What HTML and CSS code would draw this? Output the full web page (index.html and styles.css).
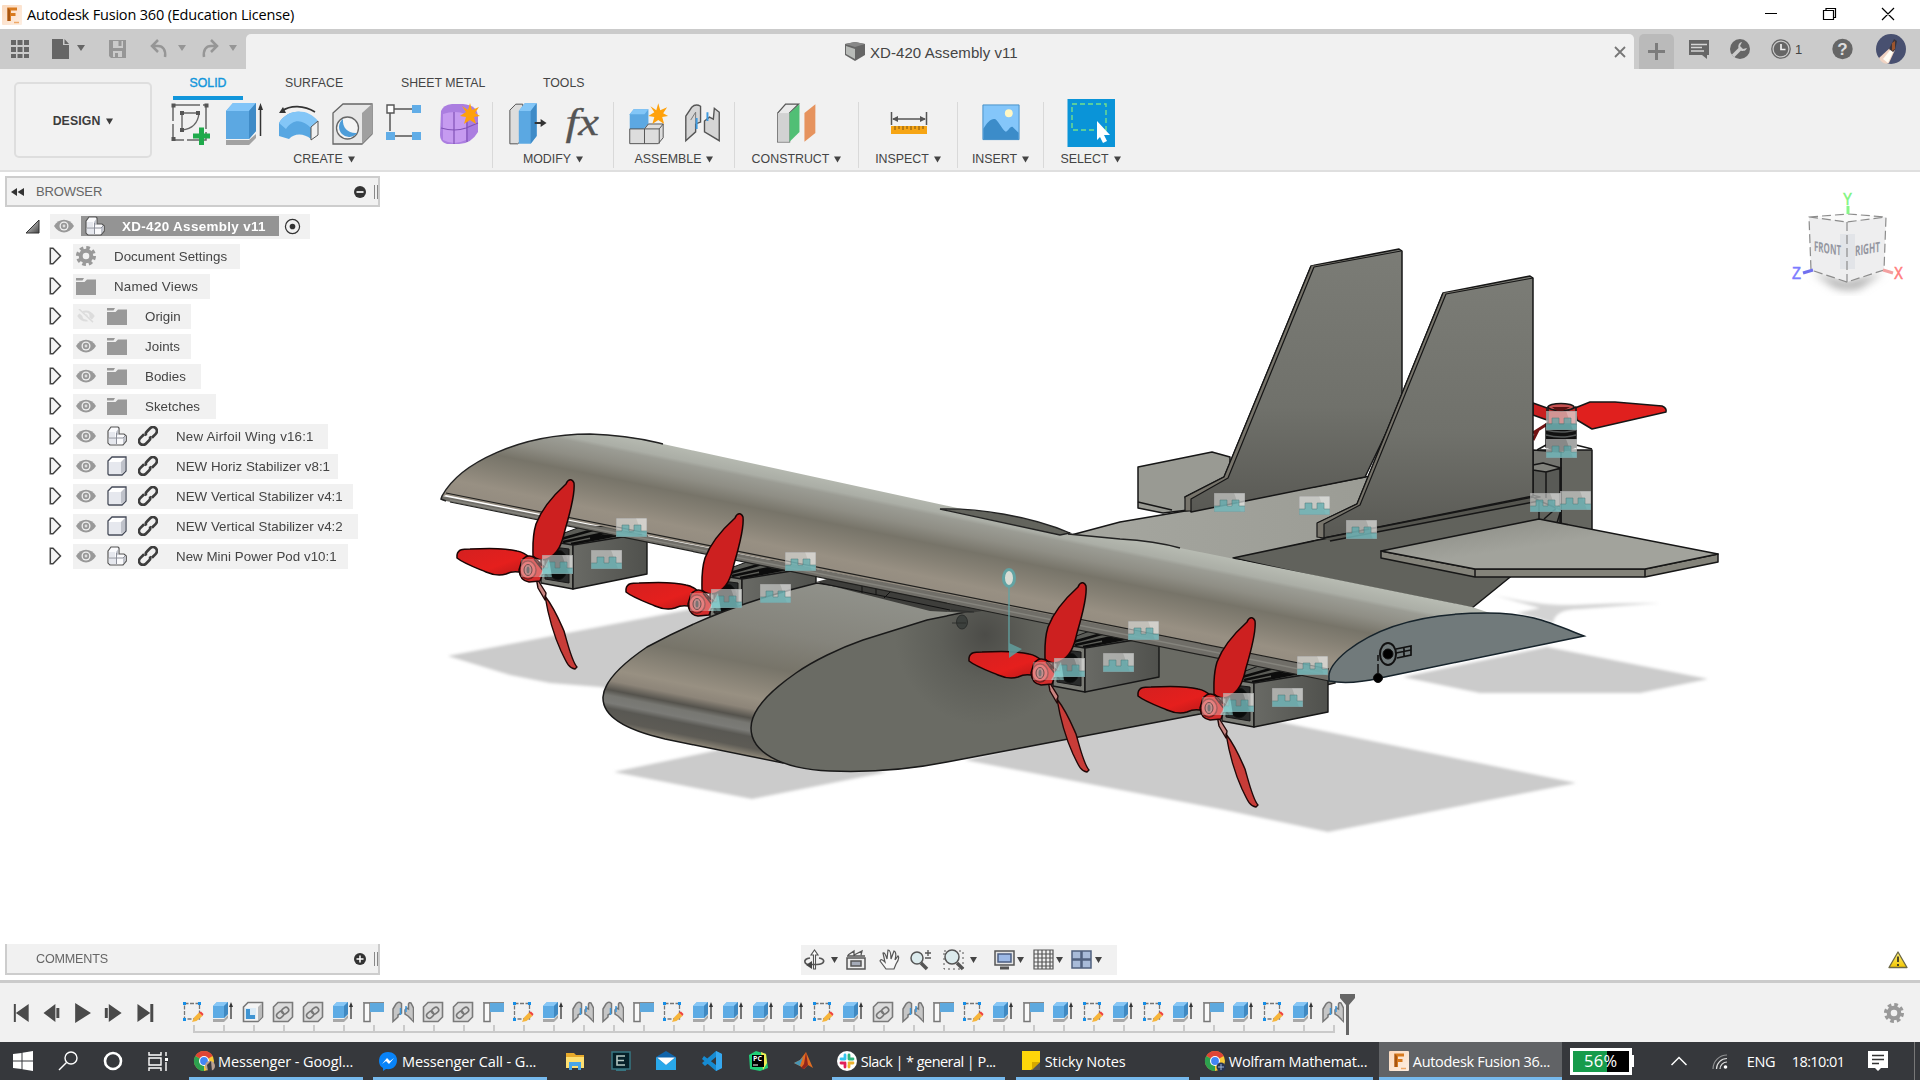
FILE: index.html
```html
<!DOCTYPE html>
<html lang="en">
<head>
<meta charset="utf-8">
<title>Autodesk Fusion 360 (Education License)</title>
<link rel="stylesheet" href="styles.css">
</head>
<body>
<svg class="defs" aria-hidden="true">
  <defs>
    <linearGradient id="orange" x1="0" y1="0" x2="1" y2="1"><stop offset="0" stop-color="#fbd9bd"/><stop offset="1" stop-color="#fdeee2"/></linearGradient>
    <linearGradient id="tri" x1="0" y1="0" x2="1" y2="1"><stop offset="0" stop-color="#eee"/><stop offset="1" stop-color="#444"/></linearGradient>
    <linearGradient id="warn" x1="0" y1="0" x2="0" y2="1"><stop offset="0" stop-color="#fff27a"/><stop offset="1" stop-color="#f2c500"/></linearGradient>
  </defs>
  <symbol id="fusion" viewBox="0 0 20 20"><rect width="20" height="20" rx="1" fill="url(#orange)"/><path d="M5.500 16V2.500H15V5.500H9V8H13.500V11H9V16Z" fill="#d87a1e"/><path d="M5.500 2.500L8 5V16H5.500Z" fill="#a85510"/><path d="M12 17.500h5" stroke="#efa868" stroke-width="1.500"/></symbol>
  <symbol id="caret" viewBox="0 0 8 7"><path d="M0 0H8L4 7Z" fill="currentColor"/></symbol>
  <symbol id="eye" viewBox="0 0 20 14"><path d="M0 7C5-1.500 15-1.500 20 7C15 15.500 5 15.500 0 7Z" fill="#999"/><circle cx="10" cy="7" r="4.500" fill="#f1f1f1"/><circle cx="10" cy="7" r="3.200" fill="#999"/><circle cx="10" cy="7" r="1.400" fill="#ddd"/></symbol>
  <symbol id="eyeoff" viewBox="0 0 20 16"><path d="M0 8C5-.500 15-.500 20 8C15 16.500 5 16.500 0 8Z" fill="#dcdcdc"/><circle cx="10" cy="8" r="4" fill="#f1f1f1"/><circle cx="10" cy="8" r="2" fill="#dcdcdc"/><path d="M1 1L18 16" stroke="#f1f1f1" stroke-width="4"/><path d="M2 0L18 15" stroke="#dcdcdc" stroke-width="1.700"/></symbol>
  <symbol id="folder" viewBox="0 0 20 17"><path d="M0 0H8L6.500 2.500H0ZM0 4H8.500L11 1.500H20V17H0Z" fill="#999"/></symbol>
  <symbol id="gear" viewBox="0 0 20 20"><circle cx="10" cy="10" r="8.200" fill="none" stroke="#999" stroke-width="3.600" stroke-dasharray="3.600 2.840"/><circle cx="10" cy="10" r="5.300" fill="none" stroke="#999" stroke-width="4"/></symbol>
  <symbol id="arrow" viewBox="0 0 12 18"><path d="M.800 1.200H3.500L11 9L3.500 16.800H.800Z" fill="#f4f4f4" stroke="#444" stroke-width="1.500"/></symbol>
  <symbol id="comp" viewBox="0 0 20 20"><path d="M1 5L4 1H11L12 2V8H17L19.300 10V15L16 19H3L1 17Z" fill="#fafafc" stroke="#555" stroke-width="1.200"/><path d="M1.800 12H9V18H3L1.800 17ZM2 6H8V11H2Z" fill="#e6e8ee"/><path d="M9 6L11.300 3V8L9 11ZM16 12L18.500 10V15L16 18Z" fill="#bfc2ca"/><path d="M9.500 7V18M10 12H16L18 10M2 12H9" fill="none" stroke="#8d909a" stroke-width="1"/></symbol>
  <symbol id="body" viewBox="0 0 20 20"><path d="M1 5L5 1H19V15L15 19H2L1 18Z" fill="#fff" stroke="#444a58" stroke-width="1.300"/><path d="M2 6H14V18H2Z" fill="#e6e8ee"/><path d="M14 6L18 2V15L14 18Z" fill="#bfc2ca"/></symbol>
  <symbol id="link" viewBox="0 0 20 20"><g transform="rotate(-45 10 10)" fill="none" stroke="#3d3d3d" stroke-width="2.700"><path d="M8.500 6H3A3.500 3.500 0 0 0 3 14H7.500A3.500 3.500 0 0 0 11 11.500"/><path d="M11.500 14H17A3.500 3.500 0 0 0 17 6H12.500A3.500 3.500 0 0 0 9 8.500"/></g></symbol>
  <symbol id="t-sketch" viewBox="0 0 22 22"><path d="M2.500 2.500H17.500V18H2.500Z" fill="none" stroke="#777" stroke-width="1.300" stroke-dasharray="4 1.500"/><path d="M1 1h3v3h-3zM16 1h3v3h-3zM1 17h3v3h-3z" fill="#168fe8"/><path d="M10 21L12 16.500L17 11.500L20.500 15L14.500 20Z" fill="#f6b53c"/><path d="M17 11.500L20.500 15L21.500 13L19 10.500Z" fill="#f0413c"/></symbol>
  <symbol id="t-ext" viewBox="0 0 22 22"><path d="M1 21V18H12L16 14V17L12 21H1Z" fill="#a8a8a8"/><path d="M1 17V5L5 1H16V13L12 17Z" fill="#5dabe4"/><path d="M1 5L5 1H16L12 5Z" fill="#87c7f6"/><path d="M12 5L16 1V13L12 17Z" fill="#3f89c2"/><path d="M19 18V4" stroke="#333" stroke-width="1.300"/><path d="M17 6L19 1L21 6Z" fill="#333"/></symbol>
  <symbol id="t-box" viewBox="0 0 22 22"><path d="M1.500 6L6 1.500H20.500V16L16 20.500H1.500Z" fill="#f4f4f4" stroke="#777" stroke-width="1.600"/><path d="M16 6L20 2V16L16 20Z" fill="#bbb"/><path d="M3 7H14V18H3Z" fill="#dcebf6"/><path d="M4 8H8V14H13V18H4Z" fill="#3f94d2"/></symbol>
  <symbol id="t-link" viewBox="0 0 22 22"><path d="M1.500 6L6 1.500H20.500V16L16 20.500H1.500Z" fill="#dcdcdc" stroke="#7a7a7a" stroke-width="1.600"/><g transform="rotate(-40 10.500 11.500)" fill="none" stroke="#777" stroke-width="1.600"><rect x="3.500" y="9" width="7.500" height="5.500" rx="2.700"/><rect x="10" y="9" width="7.500" height="5.500" rx="2.700"/></g></symbol>
  <symbol id="t-flag" viewBox="0 0 22 22"><path d="M2 2H8V20.500H2Z" fill="#fafafa" stroke="#777" stroke-width="1.500"/><path d="M8 1H22V11H8Z" fill="#5ea9de"/><path d="M1 1.500H22" stroke="#888"/></symbol>
  <symbol id="t-joint" viewBox="0 0 22 22"><path d="M1 8L4 3Q6.500 0 9.500 2.500V12L6 14V16L1 20.500Z" fill="#c6c6c6" stroke="#777" stroke-width="1.500"/><path d="M21.500 7L19 2Q17 1 16.500 3V8L14.500 7L13 9V13L16 15L21.500 20.500Z" fill="#c6c6c6" stroke="#777" stroke-width="1.500"/><path d="M8.500 7V14M14 5V11" stroke="#3f9be0" stroke-width="1.500"/></symbol>
  <symbol id="chrome" viewBox="0 0 22 22"><circle cx="11" cy="11" r="10" fill="#f9c937"/><path d="M11 11L2.300 6A10 10 0 0 1 19.700 6Z" fill="#de4535"/><path d="M11 11L2.300 6A10 10 0 0 0 11 21Z" fill="#2da14f"/><circle cx="11" cy="11" r="5" fill="#fff"/><circle cx="11" cy="11" r="3.900" fill="#4285f4"/></symbol>
  <symbol id="badge" viewBox="0 0 31 19"><path d="M0 0H31V19H0Z" fill="#e6e8e6" fill-opacity=".56"/><path d="M20 0H31V19H27Z" fill="#fff" fill-opacity=".25"/><path d="M0 13H6V7H13V13H18V7H25V13H31V19H0Z" fill="#50a9ab" fill-opacity=".66"/><path d="M0 13H6V7H13V13H18V7H25V13H31" fill="none" stroke="#4d7777" stroke-opacity=".65" stroke-width=".8"/><path d="M0 0H31V19H0Z" fill="none" stroke="#888" stroke-opacity=".6"/></symbol>
</svg>

<header class="titlebar">
  <svg class="app-icon"><use href="#fusion"/></svg>
  <span class="app-title">Autodesk Fusion 360 (Education License)</span>
  <svg class="win-buttons" viewBox="0 0 150 29" fill="none" stroke="#000" stroke-width="1.200"><path d="M1 13.500H13M59.500 10.500H69.500V19.500H59.500ZM62 10V8.500H71.500V17.500H70M118 8L130 20M130 8L118 20"/></svg>
</header>

<nav class="tabbar">
  <div class="quick">
    <svg viewBox="0 0 246 40">
      <g fill="#666"><path d="M11 11h5v5h-5zM17.500 11h5v5h-5zM24 11h5v5h-5zM11 18h5v5h-5zM17.500 18h5v5h-5zM24 18h5v5h-5zM11 25h5v4h-5zM17.500 25h5v4h-5zM24 25h5v4h-5z"/><path d="M52 10H63V16H69V30H52ZM64.500 10L69 15H64.500ZM77 16H85L81 22Z"/></g>
      <g fill="#969696"><path d="M109 11H126V29H111L109 27ZM113 12V19H123V12ZM113 22V28H122V22Z" fill-rule="evenodd"/><path d="M115 24h3v4h-3zM118.500 12h3v5h-3zM178 16H186L182 22ZM229 16H237L233 22Z"/></g>
      <g fill="none" stroke="#969696" stroke-width="2.500"><path d="M158 11L152 17L158 23M152 17H158C163 17 166 21 165 28M211 11L217 17L211 23M217 17H211C206 17 203 21 204 28"/></g>
    </svg>
  </div>
  <div class="doc-tab">
    <svg class="doc-cube" viewBox="0 0 20 20"><path d="M0 2L10 0L20 2V13L10 19L0 13Z" fill="#666"/><path d="M1 4L10 7V17L1 12Z" fill="#b8bbb8"/><path d="M0 2L10 5L20 2L10 0Z" fill="#888"/></svg>
    <span>XD-420 Assembly v11</span>
    <svg class="tab-close" viewBox="0 0 12 12"><path d="M1 1L11 11M11 1L1 11" stroke="#777" stroke-width="1.800"/></svg>
  </div>
  <div class="new-tab"><svg viewBox="0 0 17 17"><path d="M8.500 0V17M0 8.500H17" stroke="#7c7c7c" stroke-width="3"/></svg></div>
  <div class="tools-right">
    <svg viewBox="0 0 247 40">
      <path d="M15 11H35V26H33V30L28 26H15Z" fill="#666"/><path d="M17 15.500H33M17 18.500H28M17 22H30" stroke="#d5d5d5" stroke-width="1.500"/>
      <circle cx="66" cy="20" r="10" fill="#666"/><path d="M59 27L67 19" stroke="#ccc" stroke-width="3.500"/><path d="M68 13A4.500 4.500 0 1 0 73 19L69 20L66 17Z" fill="#ccc"/>
      <circle cx="107" cy="20" r="9.200" fill="none" stroke="#666" stroke-width="1.300"/><circle cx="107" cy="20" r="7.300" fill="#666"/><path d="M107 15V20.500H111.500" stroke="#eee" stroke-width="1.700" fill="none"/>
      <text x="121" y="25" font-size="13" fill="#444">1</text>
      <circle cx="168.500" cy="20" r="10.200" fill="#666"/><text x="168.500" y="26" font-size="17" font-weight="bold" text-anchor="middle" fill="#ddd">?</text>
      <circle cx="217" cy="20" r="15" fill="#485070"/><path d="M205 29L218 17L221 21L215 34C211 36 207 33 205 29Z" fill="#f0d3c3"/><path d="M209 30L217 20L219 23L214 34Z" fill="#fffdf5"/><path d="M215 20L220 10L223 12L221 21L219 23Z" fill="#39343c"/><path d="M218 14L221 12V20L218 22Z" fill="#9b542e"/>
    </svg>
  </div>
</nav>

<section class="ribbon">
  <button class="design">DESIGN <svg><use href="#caret"/></svg></button>
  <div class="ribbon-main">
    <div class="modes"><span class="on">SOLID</span><span class="surface">SURFACE</span><span class="sheet">SHEET METAL</span><span class="tools">TOOLS</span></div>
    <div class="groups">
      <div class="group g-create">
        <svg viewBox="0 0 336 48" fill="none">
          <path d="M17 6H50V41H17Z" stroke="#666" stroke-width="1.500" stroke-dasharray="27 3"/><path d="M26 14H43C42 24 36 30 26 31Z" stroke="#666" stroke-width="1.400"/><path d="M15.500 4.500h4v4h-4zM48.500 4.500h4v4h-4zM15.500 38h4v4h-4zM24 12h4v4h-4zM40 12h4v4h-4zM24 29h4v4h-4z" fill="#555"/><path d="M37 37H54M45.500 28.500V46" stroke="#1faa4b" stroke-width="5"/>
          <path d="M70 41H93L100 35V39L93 46H70Z" fill="#a2a2a2"/><path d="M70 12L77 4H100V32L93 40H70Z" fill="#5ca8e2"/><path d="M70 12L77 4H100L93 12Z" fill="#82c5f8"/><path d="M93 12L100 4V32L93 40Z" fill="#3f8bc7"/><path d="M104.500 37V8" stroke="#333" stroke-width="1.500"/><path d="M102 11L104.500 4L107 11Z" fill="#333"/>
          <path d="M123 24C132 9 152 9 162 24L155 40C148 34 138 34 133 40L123 37Z" fill="#58a7e2"/><path d="M123 24C132 9 152 9 162 22L155 29C146 20 137 20 130 30Z" fill="#83c6f7"/><path d="M155 28L162 22V36L155 41Z" fill="#f0f0f0" stroke="#555"/><path d="M126 12C134 6 148 6 159 13" stroke="#333" stroke-width="1.600"/><path d="M123 14L127 8L130 14Z" fill="#333"/>
          <path d="M177 14L187 5H216V35L206 45H177Z" fill="#e7e7e7" stroke="#666" stroke-width="1.300"/><path d="M206 14L216 5V35L206 45Z" fill="#a0a0a0"/><circle cx="191.500" cy="29" r="11" fill="#f4f4f4" stroke="#666" stroke-width="1.300"/><path d="M187 20A10 10 0 1 0 201 34C193 35 186 29 187 20Z" fill="#4d9dd9"/>
          <path d="M238 10H257M234 14V32M238 37H257" stroke="#555" stroke-width="1.500"/><path d="M231 6H238V14H231Z" fill="#fff" stroke="#555" stroke-width="1.400"/><path d="M256 6H265V14H256ZM230 33H239V41H230ZM256 33H265V41H256Z" fill="#61ade7"/>
          <path d="M285 12Q287 6 296 5H307Q321 6 322 17V33Q315 45 303 45H291Q284 43 284 36Z" fill="#ab7ee0"/><path d="M287 15Q299 11 310 15V41Q298 47 287 41Z" fill="#c69bf0"/><path d="M285 29Q299 33 310 29L322 24M298 13V45M311 15V43" stroke="#8152b7" stroke-width="1.200"/><path d="M314 4L316 11L323 8L319 14L324 17L318 18L320 25L314 21L308 25L310 18L304 17L310 13L306 7L312 11Z" fill="#ffa10a"/>
        </svg><span>CREATE <svg><use href="#caret"/></svg></span>
      </div>
      <div class="group g-modify">
        <svg viewBox="0 0 121 48" fill="none"><path d="M17 11L23 5H30V40L25 45H17Z" fill="#ddd" stroke="#555"/><path d="M26 12L32 4H44V37L38 45H26Z" fill="#5ba8e2"/><path d="M26 12L32 4H44L38 12Z" fill="#83c6f7"/><path d="M38 12L44 4V37L38 45Z" fill="#3f8bc7"/><path d="M42 24H50" stroke="#333" stroke-width="2"/><path d="M48 20L54 24L48 28Z" fill="#333"/><text x="73" y="36.500" font-family="Liberation Serif, serif" font-style="italic" font-size="38" textLength="34" lengthAdjust="spacingAndGlyphs" fill="#555" stroke="#555" stroke-width=".3">fx</text></svg><span>MODIFY <svg><use href="#caret"/></svg></span>
      </div>
      <div class="group g-assemble">
        <svg viewBox="0 0 122 48"><path d="M16 15L20 10H35V25L30 30H16Z" fill="#5ca8e2"/><path d="M16 15L20 10H35L31 15Z" fill="#83c6f7"/><path d="M16 30H31L35 25H50V39L45 45H16Z" fill="#ddd" stroke="#555"/><path d="M31 30V45M31 30H46L50 25M46 30V45" fill="none" stroke="#555"/><path d="M45 4L47 11L54 8L50 14L55 17L49 18L51 25L45 21L39 25L41 18L35 17L41 13L37 7L43 11Z" fill="#ffa10a"/><path d="M73 17L79 8Q83 4 88 7V23L83 25V33L73 42Z" fill="#d5d5d5" stroke="#555" stroke-width="1.400"/><path d="M78 21L83 13V25" fill="none" stroke="#777"/><path d="M107 13L102 9L101 20L97 18L92 22V33L107 42Z" fill="#d5d5d5" stroke="#555" stroke-width="1.400"/><path d="M84 19V30M95 13V22" stroke="#3f9be0" stroke-width="2"/></svg><span>ASSEMBLE <svg><use href="#caret"/></svg></span>
      </div>
      <div class="group g-construct">
        <svg viewBox="0 0 124 48"><path d="M43 14L51 5H64L55 14V43H43Z" fill="#eaeaea" stroke="#555" stroke-width="1.300"/><path d="M43 14H55V43H43Z" fill="#d2d2d2"/><path d="M55 14L65 5V33L55 43Z" fill="#51bf75"/><path d="M70 14L81 5V34L70 43Z" fill="#e6935e"/></svg><span>CONSTRUCT <svg><use href="#caret"/></svg></span>
      </div>
      <div class="group g-inspect">
        <svg viewBox="0 0 98 48"><path d="M32.500 13V26M67.500 13V26M34 20H66" stroke="#555" stroke-width="1.500"/><path d="M33 20L39 17V23ZM67 20L61 17V23Z" fill="#555"/><path d="M32 27H68V35H32Z" fill="#f6a514"/><path d="M36 27v4M40 27v3M44 27v4M48 27v3M52 27v4M56 27v3M60 27v4M64 27v3" stroke="#7a5310"/></svg><span>INSPECT <svg><use href="#caret"/></svg></span>
      </div>
      <div class="group g-insert">
        <svg viewBox="0 0 87 48"><path d="M25.500 5.500H62.500V41H25.500Z" fill="#84c6fa" stroke="#4790c8"/><path d="M26 30C30 23 34 19 38 20C42 23 46 32 49 33C52 32 53 27 56 28L62 34V41H26Z" fill="#3c8cc9"/><circle cx="52" cy="14" r="4" fill="#fff7c4"/></svg><span>INSERT <svg><use href="#caret"/></svg></span>
      </div>
      <div class="group g-select">
        <svg viewBox="0 0 93 48"><path d="M23.500 0H71V48H23.500Z" fill="#0a94d8"/><path d="M28 5H62V31H28Z" fill="none" stroke="#74e08b" stroke-width="1.400" stroke-dasharray="5 3"/><path d="M53 22L66 36H60L63 42L59 44L56 38L53 41Z" fill="#fff"/></svg><span>SELECT <svg><use href="#caret"/></svg></span>
      </div>
    </div>
  </div>
</section>

<main class="canvas">
<svg class="scene" viewBox="0 172 1920 808">
  <defs>
    <linearGradient id="wing" gradientUnits="userSpaceOnUse" x1="910" y1="491" x2="891" y2="584"><stop offset="0" stop-color="#b9bdb4"/><stop offset=".16" stop-color="#abaea6"/><stop offset=".2" stop-color="#9b9c94"/><stop offset=".34" stop-color="#8f8e85"/><stop offset=".5" stop-color="#777469"/><stop offset=".66" stop-color="#858074"/><stop offset=".85" stop-color="#989083"/><stop offset="1" stop-color="#948c80"/></linearGradient>
    <linearGradient id="nose" gradientUnits="userSpaceOnUse" x1="700" y1="560" x2="664" y2="740"><stop offset="0" stop-color="#90918a"/><stop offset=".3" stop-color="#85847c"/><stop offset=".5" stop-color="#777469"/><stop offset=".68" stop-color="#989082"/><stop offset=".74" stop-color="#8d8579"/><stop offset=".79" stop-color="#55534d"/><stop offset=".82" stop-color="#777772"/><stop offset=".86" stop-color="#7b7b77"/><stop offset=".89" stop-color="#595853"/><stop offset=".95" stop-color="#5d5b55"/><stop offset="1" stop-color="#948c7c"/></linearGradient>
    <linearGradient id="finG" x1="0" y1="0" x2="0" y2="1"><stop offset="0" stop-color="#7b7c76"/><stop offset=".6" stop-color="#70716b"/><stop offset="1" stop-color="#595954"/></linearGradient>
    <linearGradient id="deck" x1="0" y1="0" x2="1" y2="0"><stop offset="0" stop-color="#a6a7a0"/><stop offset=".7" stop-color="#9a9b94"/><stop offset="1" stop-color="#74756e"/></linearGradient>
    <radialGradient id="side" gradientUnits="userSpaceOnUse" cx="985" cy="635" r="90"><stop offset="0" stop-color="#4c4c48"/><stop offset=".5" stop-color="#5e5f59"/><stop offset="1" stop-color="#6a6b64"/></radialGradient>
    <linearGradient id="stab" x1="0" y1="0" x2="1" y2="1"><stop offset="0" stop-color="#85867f"/><stop offset=".5" stop-color="#a2a39c"/></linearGradient>
    <linearGradient id="podG" x1="0" y1="0" x2="1" y2="0"><stop offset="0" stop-color="#696a65"/><stop offset="1" stop-color="#50514d"/></linearGradient>
    <linearGradient id="red" x1="0" y1="0" x2="1" y2="1"><stop offset="0" stop-color="#d42020"/><stop offset=".6" stop-color="#e51f1d"/><stop offset="1" stop-color="#b51919"/></linearGradient>
    <filter id="soft" x="-10%" y="-10%" width="120%" height="120%"><feGaussianBlur stdDeviation="1.500"/></filter>
    <filter id="softer" x="-30%" y="-30%" width="160%" height="160%"><feGaussianBlur stdDeviation="4"/></filter>
    <g id="pod" stroke="#161616" stroke-linejoin="round">
      <path d="M543 541L583 526L660 528L647 534L573 546Z" fill="#5b5c57"/><path d="M554 541L600 528M563 542L614 531M571 544L628 533M590 538L640 531" stroke="#0c0c0c" stroke-width="2.500"/>
      <path d="M541 540L573 545V589L541 583Z" fill="#7a7b75" stroke-width="1.400"/><path d="M545 546L569 549V583L545 579Z" fill="#292b2b"/><ellipse cx="558" cy="565" rx="10" ry="15" fill="#090b0b"/>
      <path d="M573 545L647 533V574L573 589Z" fill="url(#podG)" stroke-width="1.400"/>
    </g>
    <g id="blades" stroke="#1a0505" stroke-width="1.500" stroke-linejoin="round">
      <path d="M457 555C458 549 463 549 470 549C488 548 506 548 517 551C523 552 527 555 530 558L519 572C514 571 510 572 506 574C500 576 493 575 486 572C474 567 463 563 457 558Z" fill="url(#red)"/>
      <path d="M533 556C533 546 532 537 536 524C542 508 556 493 566 484C568 479 572 478 574 483C575 491 570 513 565 530C562 544 558 554 547 559C543 561 535 559 533 556Z" fill="#cd2020"/>
      <path d="M522 560Q528 553 535 558L545 568L540 581L529 582Q520 581 519 570Z" fill="#d52d2d"/><path d="M534 559L548 577M538 563L549 570" fill="none"/><ellipse cx="528" cy="570" rx="8" ry="9" fill="#df5454" stroke-opacity=".5"/><ellipse cx="528" cy="570" rx="4" ry="5.500" fill="#a96c6c" stroke-width="1"/><ellipse cx="528" cy="570" rx="1.500" ry="3.500" fill="#303f41" stroke="none"/>
    </g>
    <g id="low" stroke="#210808" stroke-width="1.400" stroke-linejoin="round"><path d="M536 577L546 593L545 600L538 588Z" fill="#c98480"/><path d="M545 596C555 609 560 622 564 631C568 645 572 662 577 667L575 669C568 668 566 661 561 651C556 640 549 620 545 596Z" fill="#c83c38"/></g>
    <g id="marks"><use href="#badge" x="616" y="518" width="31" height="19"/><use href="#badge" x="591" y="550" width="31" height="19"/><use href="#badge" x="542" y="555" width="31" height="19"/><path d="M521 559H543V577H521Z" fill="#f2c7c4" fill-opacity=".38"/><path d="M539 577L549 559L552 577Z" fill="#a4efed" fill-opacity=".5"/></g>
  </defs>

  <g fill="#cbcbcb" filter="url(#soft)">
    <path d="M448 656L697 608L790 640L640 694L600 687L550 683L510 675Z"/><path d="M614 772L723 749L887 772L752 799Z"/><path d="M965 760L1200 705L1280 722L1576 783L1328 832L1225 810Z"/><path d="M1403 677L1547 647L1708 679L1640 693H1480Z"/><path d="M1493 595Q1540 606 1573 605Q1610 603 1660 603L1580 609Q1555 609 1553 623L1517 613L1540 608Z" opacity=".85"/>
  </g>

  <g stroke="#161616" stroke-width="1.500" stroke-linejoin="round">
    <path d="M1138 467L1212 452L1230 457V505L1163 513L1138 508Z" fill="#999a93"/><path d="M1138 502L1172 510" fill="none"/>
    <path d="M1561 450H1592V545H1540V450Z" fill="#656660"/><path d="M1533 450L1561 452V545H1533Z" fill="#747570"/><path d="M1533 465L1560 469V532L1533 528Z" fill="#595a56"/><path d="M1533 465L1543 463L1561 468L1546 472L1533 470ZM1546 472V498" fill="#81827c"/><path d="M1561 452V526"/>
    <path d="M1533 403L1547 408V420L1533 415Z" fill="#c92020"/><path d="M1533 433L1552 421M1533 440L1538 430" stroke="#721313" stroke-width="3"/>
    <path d="M1575 408L1590 402H1615L1662 406Q1667 408 1666 412L1592 429L1577 420Z" fill="#e0201e"/>
    <path d="M1548 407V426H1576V407Q1561 414 1548 407Z" fill="#b92c2c"/><ellipse cx="1561" cy="407" rx="13" ry="3.500" fill="#c65050"/><path d="M1552 407H1570L1563 411H1557Z" fill="#571111" stroke="none"/>
    <path d="M1546 424H1576V447Q1561 454 1546 447Z" fill="#111"/><path d="M1546 430Q1561 434 1576 430M1546 435Q1561 439 1576 435" stroke="#565959" fill="none"/><path d="M1537 450L1546 445M1576 445L1592 449" fill="none"/>
    <path d="M1060 538L1120 522L1191 510L1365 477L1420 468L1540 497L1318 540L1233 560L1120 545Z" fill="url(#deck)"/>
    <path d="M1233 558L1318 540L1535 499L1561 510L1550 545L1509 578L1472 608L1318 577Z" fill="#61625c"/>
    <path d="M1311 266L1399 249L1402 251V400L1365 477L1191 512L1185 497L1224 477Z" fill="url(#finG)"/><path d="M1311 266L1224 477L1185 497V511H1191V499L1228 478L1314 267L1401 251" fill="#77746b" stroke-width="1.200"/>
    <path d="M1443 293L1530 276L1533 278V496L1324 538L1318 523L1357 504Z" fill="url(#finG)"/><path d="M1443 293L1357 504L1317 523V537L1324 538V524L1360 505L1446 294L1533 278" fill="#78756c" stroke-width="1.200"/>
    <path d="M1324 538L1533 497L1539 501L1330 541" fill="#55554f"/>
    <path d="M1539 501V519M1544 519L1561 504" fill="none"/>
    <path d="M1381 551L1475 569H1645L1718 554V562L1645 577H1475L1381 558Z" fill="#84837a"/><path d="M1381 551L1539 519L1718 554L1645 569H1475Z" fill="url(#stab)"/><path d="M1475 569V577M1645 569V577" fill="none"/>
  </g>

  <use href="#pod" x="169" y="34"/>
  <g stroke="#191919" stroke-width="1.500">
    <path d="M817 583C747 600 697 620 647 647C622 664 604 681 603 697C602 718 630 731 665 739L783 763L930 650L990 610Z" fill="url(#nose)"/>
    <path d="M990 607L927 620L863 640C840 648 813 661 796 673C770 691 751 711 751 728C751 751 779 769 830 771C880 773 917 768 947 762L1200 714L1335 683L1330 640Z" fill="url(#side)"/>
  </g>
  <path d="M816 582L838 576L1000 608L970 613L930 611Z" fill="#3e3e3b"/><path d="M820 583L950 610M862 586V593M876 589V595M890 592L884 598" stroke="#111"/>
  <use href="#pod"/><use href="#pod" x="512" y="103"/><use href="#pod" x="681" y="138"/>

  <path d="M442 497C460 463 520 434 590 434C630 435 650 441 663 444L1040 526L1068 534L1120 539C1140 540 1160 543 1175 547L1472 607L1490 613L1400 630L1329 672L446 495Z" fill="url(#wing)"/>
  <path d="M940 509C978 508 1030 516 1070 533L1060 535Z" fill="#63645d" stroke="#222" stroke-width="1.300"/>
  <path d="M442 496L1329 669V681L441 500Z" fill="#706e68"/><path d="M450 500L1329 675" stroke="#85847d" stroke-width="1.500"/><path d="M446 493L1329 669M450 502L1329 681" stroke="#20201e" stroke-width="1.200"/>
  <path d="M446 501L441 499L442 496C460 463 520 434 590 434C630 435 650 441 663 444M1068 534L1120 539Q1155 541 1180 548" fill="none" stroke="#222" stroke-width="1.500"/>
  <path d="M1329 678C1328 670 1336 660 1347 651C1375 629 1420 613 1487 613C1530 613 1548 622 1584 636L1380 678Q1350 685 1329 681Z" fill="#717a7b" stroke="#16232b" stroke-width="1.500"/>
  <g stroke="#111" fill="none"><ellipse cx="1388" cy="654" rx="8" ry="11" stroke-width="2"/><circle cx="1388" cy="654" r="5" fill="#000"/><path d="M1396 649L1411 646V655L1397 658M1396 653L1411 650M1404 647V656" stroke-width="1.700"/><path d="M1378 678V655" stroke-dasharray="14 3" stroke-width="1.500"/><circle cx="1378" cy="678" r="4.500" fill="#000"/></g>
  <g stroke="#252827" stroke-opacity=".8" fill="#3c403d"><ellipse cx="962" cy="622" rx="5.500" ry="7"/><path d="M952 623H966M951 610L974 612" fill="none"/></g>

  <g stroke="#62a3a3" fill="none"><ellipse cx="1009" cy="578" rx="5.500" ry="8.500" fill="#d9dcd4" stroke-width="3"/><path d="M1009 587V658" stroke-width="1.300"/></g>
  <use href="#low"/><use href="#low" x="512" y="103"/><use href="#low" x="681" y="138"/>
  <use href="#blades"/><use href="#blades" x="169" y="34"/><use href="#blades" x="512" y="103"/><use href="#blades" x="681" y="138"/>
  <path d="M1009 643L1022 649L1009 658Z" fill="#609a99" opacity=".9"/>
  <use href="#marks"/><use href="#marks" x="169" y="34"/><use href="#marks" x="512" y="103"/><use href="#marks" x="681" y="138"/>
  <use href="#badge" x="1214" y="493" width="31" height="19"/><use href="#badge" x="1299" y="496" width="31" height="19"/><use href="#badge" x="1346" y="520" width="31" height="19"/><use href="#badge" x="1530" y="493" width="31" height="19"/><use href="#badge" x="1560" y="491" width="31" height="19"/><use href="#badge" x="1546" y="411" width="31" height="19"/><use href="#badge" x="1546" y="439" width="31" height="19"/>

  <path d="M1812 272L1847 282L1884 272L1860 288Q1847 292 1834 287Z" fill="#aaa" filter="url(#softer)"/>
  <path d="M1809 217L1848 214L1886 217L1884 270L1847 282L1811 270Z" fill="#eeeeef"/><path d="M1809 217L1848 214L1886 217L1847 222Z" fill="#fafafa"/><path d="M1840 234H1855V269H1840Z" fill="#e2e4e8"/>
  <path d="M1809 217L1848 214L1886 217L1884 270L1847 282L1811 270ZM1809 217L1847 222L1886 217M1847 222V282" fill="none" stroke="#8c8c8c" stroke-width="1.200" stroke-dasharray="9 4"/>
  <g font-family="Open Sans, sans-serif" font-size="14" font-weight="700" fill="#9496a0"><text transform="matrix(1 .17 0 1 1814 251)" textLength="27" lengthAdjust="spacingAndGlyphs">FRONT</text><text transform="matrix(1 -.17 0 1 1855 256)" textLength="25" lengthAdjust="spacingAndGlyphs">RIGHT</text></g>
  <path d="M1848 206V214" stroke="#88f688" stroke-width="3"/><path d="M1813 270L1803 273" stroke="#7070ef" stroke-width="3"/><path d="M1883 270L1893 273" stroke="#f3a0a0" stroke-width="3"/>
  <g font-family="Liberation Sans, sans-serif" font-size="16" stroke-width=".5"><text x="1843" y="205" fill="#7df57d" stroke="#7df57d" textLength="9" lengthAdjust="spacingAndGlyphs">Y</text><text x="1792" y="279" fill="#7c7cff" stroke="#7c7cff" textLength="9" lengthAdjust="spacingAndGlyphs">Z</text><text x="1894" y="279" fill="#ff7c7c" stroke="#ff7c7c" textLength="9" lengthAdjust="spacingAndGlyphs">X</text></g>
</svg>

<div class="overlay">
  <aside class="left">
    <div class="panel"><svg class="rew" viewBox="0 0 13 8"><path d="M0 4L6 0V8ZM6.500 4L13 0V8Z" fill="#333"/></svg><span>BROWSER</span><svg class="dot" viewBox="0 0 12 12"><circle cx="6" cy="6" r="6" fill="#333"/><path d="M2.500 6H9.500" stroke="#fff" stroke-width="1.700"/></svg><i></i></div>
    <div class="root"><svg class="tri" viewBox="0 0 15 15"><path d="M1 14L14 1V14Z" fill="url(#tri)" stroke="#333"/></svg><div class="rootbox"><svg class="eye"><use href="#eye"/></svg><div class="sel"><svg class="ic"><use href="#comp"/></svg><b>XD-420 Assembly v11</b></div><svg class="radio" viewBox="0 0 18 18"><circle cx="9" cy="9" r="7.500" fill="none" stroke="#333" stroke-width="1.300"/><circle cx="9" cy="9" r="3" fill="#333"/></svg></div></div>
    <div class="row"><svg class="arr"><use href="#arrow"/></svg><div class="w167"><svg class="ic"><use href="#gear"/></svg><span>Document Settings</span></div></div>
    <div class="row wide"><svg class="arr"><use href="#arrow"/></svg><div class="w137"><svg class="fold"><use href="#folder"/></svg><span>Named Views</span></div></div>
    <div class="row"><svg class="arr"><use href="#arrow"/></svg><div class="w118"><svg class="eye"><use href="#eyeoff"/></svg><svg class="fold"><use href="#folder"/></svg><span>Origin</span></div></div>
    <div class="row"><svg class="arr"><use href="#arrow"/></svg><div class="w118"><svg class="eye"><use href="#eye"/></svg><svg class="fold"><use href="#folder"/></svg><span>Joints</span></div></div>
    <div class="row"><svg class="arr"><use href="#arrow"/></svg><div class="w128"><svg class="eye"><use href="#eye"/></svg><svg class="fold"><use href="#folder"/></svg><span>Bodies</span></div></div>
    <div class="row"><svg class="arr"><use href="#arrow"/></svg><div class="w143"><svg class="eye"><use href="#eye"/></svg><svg class="fold"><use href="#folder"/></svg><span>Sketches</span></div></div>
    <div class="row wide"><svg class="arr"><use href="#arrow"/></svg><div class="w255"><svg class="eye"><use href="#eye"/></svg><svg class="ic"><use href="#comp"/></svg><svg class="ic"><use href="#link"/></svg><span>New Airfoil Wing v16:1</span></div></div>
    <div class="row"><svg class="arr"><use href="#arrow"/></svg><div class="w265"><svg class="eye"><use href="#eye"/></svg><svg class="ic"><use href="#body"/></svg><svg class="ic"><use href="#link"/></svg><span>NEW Horiz Stabilizer v8:1</span></div></div>
    <div class="row"><svg class="arr"><use href="#arrow"/></svg><div class="w280"><svg class="eye"><use href="#eye"/></svg><svg class="ic"><use href="#body"/></svg><svg class="ic"><use href="#link"/></svg><span>NEW Vertical Stabilizer v4:1</span></div></div>
    <div class="row"><svg class="arr"><use href="#arrow"/></svg><div class="w285"><svg class="eye"><use href="#eye"/></svg><svg class="ic"><use href="#body"/></svg><svg class="ic"><use href="#link"/></svg><span>NEW Vertical Stabilizer v4:2</span></div></div>
    <div class="row"><svg class="arr"><use href="#arrow"/></svg><div class="w275"><svg class="eye"><use href="#eye"/></svg><svg class="ic"><use href="#comp"/></svg><svg class="ic"><use href="#link"/></svg><span>New Mini Power Pod v10:1</span></div></div>
    <div class="panel comments"><span>COMMENTS</span><svg class="dot" viewBox="0 0 12 12"><circle cx="6" cy="6" r="6" fill="#333"/><path d="M2.500 6H9.500M6 2.500V9.500" stroke="#fff" stroke-width="1.500"/></svg><i></i></div>
  </aside>
  <div class="viewbar">
    <svg viewBox="0 0 316 30" fill="none" stroke="#555" stroke-width="1.500">
      <path d="M12.500 24V10H10L13.500 5L17 10H14.500V24Z" fill="#fff" stroke-width="1.100"/><path d="M9 13C1 14 3 20 10 20M18 13C25 14 24 19 16 19.500H11" stroke-width="1.700"/><path d="M11 16L5 20L11 24Z" fill="#444" stroke="none"/>
      <path d="M46 13H64V24H46Z" fill="#eee"/><path d="M50 16H60V21H50Z" fill="#a5abb8"/><path d="M46 11H64M47 10L53 6V10L61 6L60 10" stroke-width="1.300"/>
      <path d="M85 24L79 16Q80 13 84 17L82 8Q84 7 86 14L87 5Q90 5 90 14L93 6Q96 7 94 15L97 11Q99 13 95 19L93 24Z" fill="#f7f7f7" stroke-width="1.200"/>
      <circle cx="116" cy="13" r="6" fill="#dcebed"/><path d="M120 18L126 24" stroke-width="3.500"/><path d="M124 8H130M127 5V11M124 13H130" stroke-width="1.300"/>
      <path d="M143 6H162V24H143Z" stroke-dasharray="2 3" stroke-width="1"/><circle cx="151" cy="12" r="7" fill="#dcebed"/><path d="M156 18L162 24" stroke-width="3.500"/>
      <path d="M194 6H213V20H194Z" fill="#e5e5e5"/><path d="M197 9H210V17H197Z" fill="#9db9e6" stroke="#4b5e83"/><path d="M199 23H208" stroke-width="3"/>
      <path d="M233 5H252V24H233ZM237 5V24M241 5V24M245 5V24M249 5V24M233 9H252M233 13H252M233 17H252M233 21H252" stroke-width="1.200"/>
      <path d="M271 6H280V14H271ZM281 6H290V14H281ZM271 15H280V23H271ZM281 15H290V23H281Z" fill="#a8bbd9" stroke="#50617f"/>
      <path d="M30 12H37L33.500 18ZM169 12H176L172.500 18ZM216 12H223L219.500 18ZM255 12H262L258.500 18ZM294 12H301L297.500 18Z" fill="#444" stroke="none"/>
    </svg>
  </div>
  <svg class="warning" viewBox="0 0 20 18"><path d="M10 1L19 16.500H1Z" fill="url(#warn)" stroke="#6c6845" stroke-width="1.300" stroke-linejoin="round"/><path d="M10 5.500V11M10 13V15" stroke="#222" stroke-width="1.600"/></svg>
</div>
</main>

<section class="timeline">
  <svg class="player" viewBox="0 0 180 58" fill="#4a4a4a"><path d="M14 20h2v18h-2zM16 29L29 20V38ZM44 29L56 20V38ZM57 24h3v10h-3zM76 19L92 29L76 39ZM106 24h3v10h-3zM110 20L123 29L110 38ZM139 20L152 29L139 38ZM152 20h3v18h-3z"/></svg>
  <div class="track">
    <svg><use href="#t-sketch"/></svg><svg><use href="#t-ext"/></svg><svg><use href="#t-box"/></svg><svg><use href="#t-link"/></svg><svg><use href="#t-link"/></svg><svg><use href="#t-ext"/></svg><svg><use href="#t-flag"/></svg><svg><use href="#t-joint"/></svg><svg><use href="#t-link"/></svg><svg><use href="#t-link"/></svg><svg><use href="#t-flag"/></svg><svg><use href="#t-sketch"/></svg><svg><use href="#t-ext"/></svg><svg><use href="#t-joint"/></svg><svg><use href="#t-joint"/></svg><svg><use href="#t-flag"/></svg><svg><use href="#t-sketch"/></svg><svg><use href="#t-ext"/></svg><svg><use href="#t-ext"/></svg><svg><use href="#t-ext"/></svg><svg><use href="#t-ext"/></svg><svg><use href="#t-sketch"/></svg><svg><use href="#t-ext"/></svg><svg><use href="#t-link"/></svg><svg><use href="#t-joint"/></svg><svg><use href="#t-flag"/></svg><svg><use href="#t-sketch"/></svg><svg><use href="#t-ext"/></svg><svg><use href="#t-flag"/></svg><svg><use href="#t-ext"/></svg><svg><use href="#t-sketch"/></svg><svg><use href="#t-ext"/></svg><svg><use href="#t-sketch"/></svg><svg><use href="#t-ext"/></svg><svg><use href="#t-flag"/></svg><svg><use href="#t-ext"/></svg><svg><use href="#t-sketch"/></svg><svg><use href="#t-ext"/></svg><svg><use href="#t-joint"/></svg>
    <div class="ruler"></div>
  </div>
  <svg class="marker" viewBox="0 0 15 41"><path d="M0 0H15V4L9 11V41H6V11L0 4Z" fill="#666"/></svg>
  <svg class="tl-gear"><use href="#gear"/></svg>
</section>

<footer class="taskbar">
  <div class="cell"><svg viewBox="0 0 20 20" fill="#fff"><path d="M0 3L8.500 2V9.500H0ZM9.500 1.800L20 0V9.500H9.500ZM0 10.500H8.500V18L0 17ZM9.500 10.500H20V20L9.500 18.200Z"/></svg></div>
  <div class="cell"><svg viewBox="0 0 20 20" fill="none" stroke="#fff" stroke-width="1.400"><circle cx="13" cy="7" r="6"/><path d="M8.500 11.500L1 19"/></svg></div>
  <div class="cell"><svg viewBox="0 0 20 20"><circle cx="10" cy="10" r="8" fill="none" stroke="#fff" stroke-width="2.600"/></svg></div>
  <div class="cell"><svg viewBox="0 0 20 20" fill="none" stroke="#fff" stroke-width="1.400"><path d="M1 1V4H13V1M1 7H13V14H1ZM1 20V17H13V20M18 1V5M18 11V20"/><path d="M17 7h3v3h-3z" fill="#fff" stroke="none"/></svg></div>
  <div class="task first"><svg viewBox="0 0 22 22"><use href="#chrome"/><circle cx="17" cy="16" r="5" fill="#b9a092"/><path d="M14 15L18 11L19 21H15Z" fill="#393b43"/></svg><span class="t1">Messenger - Googl...</span></div>
  <div class="task"><svg viewBox="0 0 22 22"><path d="M11 2C5 2 2 6 2 11Q2 16 6 18V21L9 19C16 20 20 16 20 10C20 5 16 2 11 2Z" fill="#0883f8"/><path d="M5 14L10 8L13 11L17 8L12 14L9 11Z" fill="#fff"/></svg><span class="t2">Messenger Call - G...</span></div>
  <div class="apps">
    <div><svg viewBox="0 0 20 20"><path d="M1 2H9L11 4H19V17H1Z" fill="#e8aa2b"/><path d="M1 6H19V17H1Z" fill="#fee071"/><path d="M4 11H16V19H13V15H7V19H4Z" fill="#48a5e8"/></svg></div>
    <div><svg viewBox="0 0 20 20"><path d="M1 1H19V18H1ZM5 19.500H15" fill="#062129" stroke="#377581" stroke-width="1.500"/><path d="M14 5H6V14H14M6 9.500H13" fill="none" stroke="#b4c8c2" stroke-width="1.600"/></svg></div>
    <div><svg viewBox="0 0 20 20"><path d="M0 6L10 0L20 6V18H0Z" fill="#1064aa"/><path d="M0 6L10 14L20 6V19H0Z" fill="#29a8ea"/><path d="M1 6.500H19L10 14Z" fill="#fff"/></svg></div>
    <div><svg viewBox="0 0 20 20"><path d="M14 0L20 3V17L14 20L0 8L2 5L14 14V6L3 15L0 12Z" fill="#168bd2"/><path d="M14 0L20 3V17L14 20Z" fill="#36a8ef"/></svg></div>
    <div><svg viewBox="0 0 20 20"><path d="M1 4L8 0L18 3L20 17L12 20L2 18Z" fill="#21cf78"/><path d="M13 1L18 3L19 12L15 19Z" fill="#f0ec52"/><path d="M4 4H16V16H4Z"/><text x="5" y="10" font-size="7" font-weight="bold" fill="#fff">PC</text><path d="M5 14H10" stroke="#fff"/></svg></div>
    <div><svg viewBox="0 0 20 20"><path d="M0 12L6 9L12 1L19 17L14 14L10 18L6 15Z" fill="#e06d22"/><path d="M0 12L6 9L9 6L6 15Z" fill="#4895b3"/><path d="M12 1L10 13L7 17L10 18L14 14Z" fill="#8f251e"/></svg></div>
  </div>
  <div class="task slack"><svg viewBox="0 0 22 22"><circle cx="11" cy="11" r="10" fill="#fff"/><g stroke-width="2.800" stroke-linecap="round"><path d="M9 5V9M5 9H7" stroke="#36c5f0"/><path d="M13 5V9M17 9H15" stroke="#2eb67d"/><path d="M9 17V13M5 13H7" stroke="#e01e5a"/><path d="M13 17V15M13 13H17" stroke="#ecb22e"/></g></svg><span class="t3">Slack | * general | P...</span></div>
  <div class="task gap"><svg viewBox="0 0 22 22"><path d="M2 1H20V13L12 20H2Z" fill="#fed60a"/><path d="M20 12V20H11Z" fill="#555"/><path d="M12 20V12H20Z" fill="#d6aa00"/></svg><span class="t4">Sticky Notes</span></div>
  <div class="task gap"><svg viewBox="0 0 22 22"><use href="#chrome"/><circle cx="17" cy="17" r="4.500" fill="#283554"/><path d="M14 17H20M17 14V20" stroke="#9db5d9"/></svg><span class="t5">Wolfram Mathemat...</span></div>
  <div class="task active"><svg><use href="#fusion"/></svg><span class="t6">Autodesk Fusion 36...</span></div>
  <div class="battery"><b>56%</b></div>
  <div class="tray">
    <svg class="chev" viewBox="0 0 16 10"><path d="M.500 9L8 1.500L15.500 9" fill="none" stroke="#fff" stroke-width="1.500"/></svg>
    <svg class="wifi" viewBox="0 0 16 16"><g fill="none" stroke="#ddd" stroke-width="1.200"><path d="M1 16A14 14 0 0 1 15 2" opacity=".55"/><path d="M4.500 16A10.500 10.500 0 0 1 15 5.500M8 16A7 7 0 0 1 15 9"/></g><circle cx="13.500" cy="14" r="1.800" fill="#fff"/></svg>
    <span class="lang">ENG</span><span class="clock">18:10:01</span>
    <svg class="notes" viewBox="0 0 20 20"><path d="M0 0H20V17H13L10 20L7 17H0Z" fill="#fff"/><path d="M4 4.500H16M4 8.500H16M4 12.500H11" stroke="#333" stroke-width="1.300"/></svg>
  </div>
</footer>
</body>
</html>
```

FILE: styles.css
```css
* { box-sizing: border-box; }
body { margin: 0; width: 1920px; height: 1080px; overflow: hidden; background: #fff; font-family: "Liberation Sans", Arial, sans-serif; display: flex; flex-direction: column; color: #444; }
svg { display: block; flex: none; }
.defs { position: absolute; width: 0; height: 0; }

.titlebar { height: 29px; display: flex; align-items: center; padding-left: 2px; font-family: "Open Sans", "Noto Sans", sans-serif; color: #000; }
.app-icon { width: 20px; height: 20px; margin-right: 5px; }
.app-title { font-size: 14.500px; letter-spacing: -.18px; white-space: nowrap; }
.win-buttons { width: 150px; height: 29px; margin-left: auto; margin-right: 6px; }

.tabbar { height: 40px; background: #cbcbcb; display: flex; align-items: flex-end; }
.quick { width: 246px; height: 40px; }
.quick svg { width: 246px; height: 40px; }
.doc-tab { width: 1388px; height: 35px; background: #f1f1f1; border-radius: 5px 5px 0 0; display: flex; align-items: center; padding-left: 599px; font-size: 15px; }
.doc-cube { width: 20px; height: 20px; margin-right: 5px; }
.doc-tab span { letter-spacing: .07px; white-space: nowrap; padding-top: 1px; }
.tab-close { width: 12px; height: 12px; margin-left: auto; margin-right: 8px; }
.new-tab { width: 35px; height: 35px; margin-left: 5px; background: #bababa; border-radius: 5px 5px 0 0; display: flex; align-items: center; justify-content: center; }
.new-tab svg { width: 17px; height: 17px; }
.tools-right svg { width: 247px; height: 40px; margin-right: -1px; }

.ribbon { height: 103px; background: #f1f1f1; border-bottom: 2px solid #dfdfdf; display: flex; padding-left: 14px; }
.design { width: 138px; height: 76px; margin: 13px 4px 0 0; padding: 2px 6px 0; background: #f2f2f2; border: 2px solid #dedede; border-radius: 5px; font: bold 12.300px "Liberation Sans", sans-serif; color: #3c3c3c; display: flex; align-items: center; justify-content: center; gap: 6px; letter-spacing: .1px; }
.design svg, .group span svg { width: 7px; height: 7px; }
.modes { height: 31px; display: flex; align-items: flex-start; font-size: 12.300px; line-height: 28px; }
.modes span { white-space: nowrap; }
.modes .on { width: 70px; height: 31px; margin-left: 17px; text-align: center; color: #1296db; border-bottom: 4px solid #1296db; -webkit-text-stroke: .4px #1296db; }
.surface { margin-left: 42px; width: 116px; }
.sheet { width: 142px; }
.groups { display: flex; }
.group { border-right: 1px solid #d9d9d9; height: 66px; margin-top: 2px; display: flex; flex-direction: column; align-items: center; }
.group > svg { height: 48px; width: 100%; margin-top: -3px; overflow: visible; }
.group span { display: flex; align-items: center; gap: 5px; font-size: 12.400px; line-height: 19px; margin-top: 3px; white-space: nowrap; }
.g-create { width: 337px; } .g-modify { width: 121px; } .g-assemble { width: 121px; } .g-construct { width: 124px; } .g-inspect { width: 99px; } .g-insert { width: 86px; } .g-select { width: 93px; border: 0; }

.canvas { height: 808px; position: relative; background: #fff; }
.scene { position: absolute; inset: 0; width: 1920px; height: 808px; }
.overlay { position: absolute; inset: 0; display: flex; align-items: flex-end; padding: 4px 12px 0 5px; }
.left { width: 375px; height: 804px; display: flex; flex-direction: column; }
.panel { height: 31px; width: 375px; background: #f1f1f1; border: 2px solid #cdcdcd; display: flex; align-items: center; padding-left: 4px; font-size: 14px; color: #666; }
.panel span { font-size: 13px; letter-spacing: -.15px; }
.rew { width: 13px; height: 8px; margin-right: 12px; }
.dot { width: 12px; height: 12px; margin-left: auto; margin-right: 8px; }
.panel i { width: 4px; height: 14px; border: solid #888; border-width: 0 1px; }
.comments { margin-top: auto; margin-bottom: 5px; padding-left: 29px; border-top: 0; }
.comments span { font-size: 12.600px; letter-spacing: -.2px; padding-top: 1px; }
.root { height: 34px; display: flex; align-items: center; padding: 4px 0 0 20px; }
.tri { width: 15px; height: 15px; margin-right: 10px; }
.rootbox { width: 260px; height: 25px; background: #f1f1f1; display: flex; align-items: center; padding-left: 4px; }
.sel { width: 198px; height: 20px; margin: 0 5px 0 7px; background: #949494; color: #fff; display: flex; align-items: center; padding-left: 4px; gap: 17px; font-size: 13.400px; }
.sel b { letter-spacing: .35px; white-space: nowrap; }
.radio { width: 17px; height: 17px; }
.row { height: 30px; display: flex; align-items: center; padding-left: 44px; }
.arr { width: 13px; height: 18px; margin-right: 11px; }
.row > div { height: 25px; background: #f1f1f1; display: flex; align-items: center; padding-left: 3px; gap: 11px; font-size: 13.330px; }
.row span { margin-left: 7px; white-space: nowrap; letter-spacing: .03px; }
.row.wide span { letter-spacing: .2px; }
.eye { width: 20px; height: 14px; } .ic { width: 20px; height: 20px; } .fold { width: 20px; height: 17px; }
.w118 { width: 118px; } .w128 { width: 128px; } .w137 { width: 137px; } .w143 { width: 143px; } .w167 { width: 167px; } .w255 { width: 255px; } .w265 { width: 265px; } .w275 { width: 275px; } .w280 { width: 280px; } .w285 { width: 285px; }
.viewbar { width: 316px; height: 30px; background: #f1f1f1; margin-left: 421px; margin-bottom: 5px; }
.viewbar svg { width: 316px; height: 30px; }
.warning { width: 20px; height: 18px; margin-left: auto; margin-bottom: 11px; }

.timeline { height: 62px; background: #f1f1f1; border-top: 3px solid #cbcbcb; display: flex; align-items: flex-start; }
.player { width: 178px; height: 58px; margin-top: 1px; }
.track { width: 1170px; display: flex; flex-wrap: wrap; padding-top: 18px; }
.track > svg { width: 22px; height: 22px; margin: 0 4px; }
.ruler { width: 1142px; height: 8px; margin: 2px 0 0 15px; border-bottom: 2px solid #cacaca; background: repeating-linear-gradient(90deg, #cacaca 0 2px, transparent 2px 30px); }
.marker { width: 15px; height: 41px; margin: 11px 0 0 -8px; }
.tl-gear { width: 20px; height: 20px; margin: 20px 16px 0 auto; }

.taskbar { height: 38px; background: #36383c; display: flex; align-items: stretch; color: #fff; font-family: "Open Sans", "Noto Sans", sans-serif; font-size: 14.500px; }
.cell { width: 45px; display: flex; align-items: center; justify-content: center; }
.cell svg, .apps svg { width: 20px; height: 20px; }
.task { width: 174px; margin-left: 10px; border-bottom: 3px solid #76b9ed; display: flex; align-items: center; padding: 3px 0 0 4px; gap: 3px; white-space: nowrap; }
.task svg { width: 22px; height: 22px; }
.task span { letter-spacing: -.1px; }
.task .t3 { letter-spacing: -.55px; }
.task .t4 { letter-spacing: -.12px; }
.task .t5 { letter-spacing: -.25px; }
.task .t6 { letter-spacing: -.3px; }
.task.first { margin-left: 9px; }
.apps { display: flex; margin-left: 5px; }
.apps div { width: 45.800px; display: flex; align-items: center; justify-content: center; }
.task.slack { margin-left: 5px; width: 173px; }
.task.gap { margin-left: 11px; width: 173px; }
.task.active { margin-left: 6px; width: 183px; background: #616366; padding-left: 10px; gap: 4px; }
.task.active svg { width: 20px; height: 20px; }
.battery { width: 62px; height: 27px; margin: 6px 0 0 8px; border: 3px solid #fff; background: linear-gradient(90deg, #179b4b 61%, #000 61%); text-align: center; line-height: 20px; font-size: 16.500px; position: relative; }
.battery::after { content: ""; position: absolute; right: -5px; top: 4px; width: 2px; height: 12px; background: #fff; }
.battery b { font-weight: 400; letter-spacing: .3px; }
.tray { flex: 1; display: flex; align-items: center; margin-right: 5px; border-right: 1px solid #777; }
.chev { width: 16px; height: 10px; margin-left: 39px; } .wifi { width: 16px; height: 16px; margin-left: 25px; }
.lang { width: 45px; margin-left: 19px; letter-spacing: -.4px; } .clock { width: 76px; letter-spacing: -.6px; } .notes { width: 20px; height: 20px; }
```
